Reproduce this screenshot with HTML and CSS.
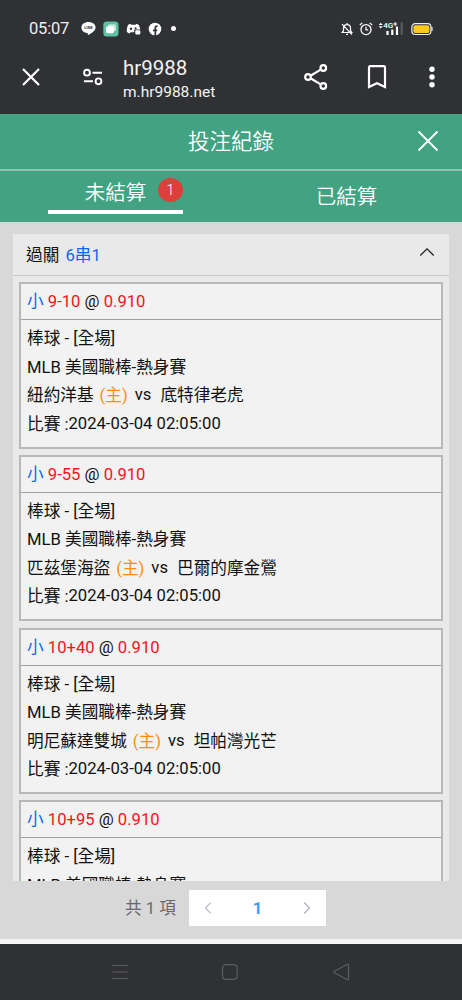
FILE: index.html
```html
<!DOCTYPE html>
<html lang="zh-Hant">
<head>
    <meta charset="UTF-8">
    <meta name="viewport" content="width=device-width, initial-scale=1.0">

    <title>投注紀錄</title>
    <link rel="stylesheet" href="styles.css">
</head>
<body>
    <div class="status-bar">
        <span class="time">05:07</span>
        <svg class="icon-line" width="15" height="15" viewBox="0 0 15 15">
            <path d="M7.500 1C3.500 1 .4 3.300.4 6.500c0 3 2.500 5.200 5.800 5.600.9.200.5 1.200.8 2 3-1.300 7.600-4.300 7.600-7.600C14.600 3.300 11.500 1 7.500 1z" fill="#fff"/>
            <text x="7.500" y="8.200" class="line-text">LINE</text>
        </svg>
        <svg class="icon-app" width="16" height="16" viewBox="0 0 16 16">
            <rect x=".3" y=".5" width="15.200" height="15" rx="3.500" fill="#5fc2a0"/>
            <rect x="5" y="3.300" width="8" height="7" rx="2" fill="#c5eadd"/>
            <rect x="3" y="5.300" width="8" height="7" rx="2" fill="#fff"/>
        </svg>
        <svg class="icon-discord" width="15" height="14" viewBox="0 0 15 14">
            <path d="M4.500 1.800 2.200 2.700C1 5 .5 7.500.9 10c1 .9 2 1.300 2.800 1.500l.8-1.300h3.700V7.500h6C14 5.600 13.300 4 12.600 2.700l-2.300-.9-.6 1H5.100z" fill="#fff"/>
            <circle cx="5" cy="6.800" r="1.200" fill="#303135"/>
            <circle cx="9.600" cy="6.200" r="1" fill="#303135"/>
            <rect x="9.300" y="8.300" width="5" height="4.300" rx="1" fill="#fff"/>
        </svg>
        <svg class="icon-facebook" width="14" height="14" viewBox="0 0 14 14">
            <circle cx="7" cy="7" r="6.300" fill="#fff"/>
            <path d="M7.300 14V8.300M5 8.300h4.200M7.300 9V5.700Q7.300 4 9.600 4.200" fill="none" stroke="#303135" stroke-width="1.700"/>
        </svg>
        <span class="dot"></span>

        <div class="status-right">
            <svg class="icon-bell" width="12" height="14" viewBox="0 0 12 14">
                <path d="M1.200 10.500h9.600L9.500 8.700V6C9.500 3.800 8 2.600 6 2.600S2.500 3.800 2.500 6v2.700zM5 12.300h2M6 1v1.500M1 2.200l10 10.300" fill="none" stroke="#fff" stroke-width="1.200"/>
            </svg>
            <svg class="icon-alarm" width="14" height="14" viewBox="0 0 14 14">
                <circle cx="7" cy="7.600" r="5" fill="none" stroke="#fff" stroke-width="1.300"/>
                <path d="M7 4.800v3h2.200M.8 3 3.300.9M13.200 3 10.700.9" fill="none" stroke="#fff" stroke-width="1.200"/>
            </svg>
            <svg class="icon-signal" width="26" height="15" viewBox="0 0 26 15">
                <path d="M.7 4 2.700 1.800 4.700 4zM.7 5.300h4L2.700 7.500z" fill="#fff"/>
                <text x="5.300" y="7" class="signal-text">4G</text>
                <path d="M15.200 3h4M17.200 1v4" stroke="#fff" stroke-width="1"/>
                <path d="M9.500 10v4M14.300 8.500V14M19 5.500V14" stroke="#fff" stroke-width="2.200"/>
                <path d="M23.700 1.500V14" stroke="#5d5e62" stroke-width="2"/>
            </svg>
            <svg class="icon-battery" width="22" height="14" viewBox="0 0 22 14">
                <rect x=".9" y="1.700" width="19" height="10.800" rx="3.200" fill="none" stroke="#eee" stroke-width="1.200"/>
                <rect x="2.400" y="3.200" width="16" height="7.800" rx="1.800" fill="#fcc91e"/>
                <path d="M21 5v4" stroke="#eee" stroke-width="1.200"/>
            </svg>
        </div>
    </div>

    <div class="browser-bar">
        <svg class="btn-close" width="20" height="20" viewBox="0 0 20 20">
            <path d="M2 2l16 16M18 2 2 18" stroke="#fff" stroke-width="2.200"/>
        </svg>
        <svg class="btn-site" width="22" height="18" viewBox="0 0 22 18">
            <g fill="none" stroke="#fff" stroke-width="1.900">
                <circle cx="5" cy="4.700" r="2.900"/>
                <path d="M10.500 4.700H20M2 13.300h9"/>
                <circle cx="16.500" cy="13.300" r="2.900"/>
            </g>
        </svg>
        <div class="site">
            <div class="site-title">hr9988</div>
            <div class="site-url">m.hr9988.net</div>
        </div>
        <svg class="btn-share" width="26" height="28" viewBox="0 0 26 28">
            <g fill="none" stroke="#fff" stroke-width="2.200">
                <path d="M7.500 12.700 17.700 6.600M7.500 15.300l10.200 6.100"/>
                <circle cx="5" cy="14" r="2.800"/>
                <circle cx="20.300" cy="5" r="2.800"/>
                <circle cx="20.300" cy="23" r="2.800"/>
            </g>
        </svg>
        <svg class="btn-bookmark" width="20" height="26" viewBox="0 0 20 26">
            <path d="M2 23V3.500Q2 2.200 3.300 2.200h13.400Q18 2.200 18 3.500V23l-8-3.700z" fill="none" stroke="#fff" stroke-width="2.200"/>
        </svg>
        <svg class="btn-more" width="8" height="24" viewBox="0 0 8 24">
            <g fill="#fff">
                <circle cx="4" cy="4.200" r="2.700"/>
                <circle cx="4" cy="12" r="2.700"/>
                <circle cx="4" cy="19.800" r="2.700"/>
            </g>
        </svg>
    </div>

    <header class="page-header">
        <h1>投注紀錄</h1>
        <svg class="header-close" width="22" height="22" viewBox="0 0 22 22">
            <path d="M1.500 1.500l19 19M20.500 1.500l-19 19" stroke="#fff" stroke-width="1.800"/>
        </svg>
    </header>

    <nav class="tabs">
        <div class="tab">
            <div class="tab-active">未結算<span class="badge">1</span></div>
        </div>
        <div class="tab tab-settled">已結算</div>
    </nav>

    <main>
        <div class="panel">
            <div class="panel-head">
                <span>過關 <span class="blue combo">6串1</span></span>
                <svg width="16" height="10" viewBox="0 0 16 10">
                    <path d="M1.300 8.500 8 1.800l6.700 6.700" fill="none" stroke="#222" stroke-width="1.300"/>
                </svg>
            </div>

            <div class="bet">
                <div class="bet-head"><span class="blue">小</span> <span class="red">9-10</span> @ <span class="red">0.910</span></div>
                <div class="bet-body">
                    <div>棒球 - [全場]</div>
                    <div>MLB 美國職棒-熱身賽</div>
                    <div class="teams"><span>紐約洋基</span><span class="home">(主)</span><span class="vs">vs</span><span>底特律老虎</span></div>
                    <div class="date">比賽 :<span>2024-03-04 02:05:00</span></div>
                </div>
            </div>

            <div class="bet">
                <div class="bet-head"><span class="blue">小</span> <span class="red">9-55</span> @ <span class="red">0.910</span></div>
                <div class="bet-body">
                    <div>棒球 - [全場]</div>
                    <div>MLB 美國職棒-熱身賽</div>
                    <div class="teams"><span>匹茲堡海盜</span><span class="home">(主)</span><span class="vs">vs</span><span>巴爾的摩金鶯</span></div>
                    <div class="date">比賽 :<span>2024-03-04 02:05:00</span></div>
                </div>
            </div>

            <div class="bet">
                <div class="bet-head"><span class="blue">小</span> <span class="red">10+40</span> @ <span class="red">0.910</span></div>
                <div class="bet-body">
                    <div>棒球 - [全場]</div>
                    <div>MLB 美國職棒-熱身賽</div>
                    <div class="teams"><span>明尼蘇達雙城</span><span class="home">(主)</span><span class="vs">vs</span><span>坦帕灣光芒</span></div>
                    <div class="date">比賽 :<span>2024-03-04 02:05:00</span></div>
                </div>
            </div>

            <div class="bet">
                <div class="bet-head"><span class="blue">小</span> <span class="red">10+95</span> @ <span class="red">0.910</span></div>
                <div class="bet-body">
                    <div>棒球 - [全場]</div>
                    <div>MLB 美國職棒-熱身賽</div>
                </div>
            </div>
        </div>

        <div class="pagination">
            <span class="total">共 1 項</span>
            <div class="pager">
                <svg width="8" height="14" viewBox="0 0 8 14">
                    <path d="M6.800 1.500 1.500 7l5.300 5.500" fill="none" stroke="#c0c4cc" stroke-width="1.400"/>
                </svg>
                <span class="page">1</span>
                <svg width="8" height="14" viewBox="0 0 8 14">
                    <path d="M1.200 1.500 6.500 7l-5.300 5.500" fill="none" stroke="#b4b8c0" stroke-width="1.400"/>
                </svg>
            </div>
        </div>
    </main>

    <footer class="nav-bar">
        <svg width="16" height="16" viewBox="0 0 16 16">
            <path d="M.5 1.500h15M.5 8h15M.5 14.500h15" stroke="#5c5d61" stroke-width="1.200"/>
        </svg>
        <svg width="18" height="18" viewBox="0 0 18 18">
            <rect x="1.500" y="1.700" width="14.600" height="14.600" rx="3.300" fill="none" stroke="#5c5d61" stroke-width="1.200"/>
        </svg>
        <svg width="18" height="18" viewBox="0 0 18 18">
            <path d="M15 1.500Q16.500.8 16.500 2.500v13Q16.500 17.200 15 16.500L2.300 9.700Q1.200 9 2.300 8.300z" fill="none" stroke="#5c5d61" stroke-width="1.200"/>
        </svg>
    </footer>
</body>
</html>
```

FILE: styles.css
```css
* {
    box-sizing: border-box;
}
body {
    margin: 0;
    height: 1000px;
    overflow: hidden;
    display: flex;
    flex-direction: column;
    font-family: Roboto, "Noto Sans CJK TC", sans-serif;
    font-size: 16.65px;
    color: #111;
    background-color: #303135;
}
svg {
    display: block;
    flex-shrink: 0;
}
.status-bar {
    height: 56px;
    flex-shrink: 0;
    display: flex;
    align-items: center;
    padding: 1px 29px 0;
    color: #eee;
}
.time {
    width: 52px;
    font-size: 16.5px;
    letter-spacing: -0.2px;
}
.line-text {
    font-size: 4px;
    font-weight: bold;
    text-anchor: middle;
    fill: #303135;
}
.icon-app {
    margin-left: 7px;
}
.icon-discord {
    margin-left: 7px;
}
.icon-facebook {
    margin-left: 7px;
}
.dot {
    width: 5px;
    height: 5px;
    margin-left: 9px;
    border-radius: 50%;
    background-color: #fff;
}
.status-right {
    display: flex;
    align-items: center;
    margin-left: auto;
}
.icon-alarm {
    margin-left: 6px;
}
.icon-signal {
    margin-left: 5px;
}
.icon-battery {
    margin-left: 7px;
}
.signal-text {
    font-size: 8px;
    font-weight: 500;
    fill: #fff;
}
.browser-bar {
    height: 58px;
    flex-shrink: 0;
    display: flex;
    align-items: center;
    padding: 0 26px 16px 21px;
    color: #f3f3f3;
}
.btn-site {
    margin-left: 41px;
}
.site {
    width: 179px;
    margin-left: 19px;
    padding-top: 4px;
}
.site-title {
    font-size: 20.5px;
    line-height: 25px;
}
.site-url {
    font-size: 15.5px;
    line-height: 22px;
}
.btn-share {
    margin-left: 1px;
}
.btn-bookmark {
    margin-left: 38px;
}
.btn-more {
    margin-left: auto;
}
.page-header {
    position: relative;
    height: 57px;
    flex-shrink: 0;
    border-bottom: 2px solid #8fc5b0;
    background-color: #41a381;
    color: #fff;
    text-align: center;
}
.page-header h1 {
    margin: 0;
    font-size: 21.5px;
    font-weight: 350;
    line-height: 55px;
}
.header-close {
    position: absolute;
    top: 16px;
    right: 23px;
}
.tabs {
    height: 51px;
    flex-shrink: 0;
    display: flex;
    background-color: #41a381;
    color: #fff;
    font-size: 20.5px;
    font-weight: 350;
}
.tab {
    flex: 1;
    display: flex;
    justify-content: center;
}
.tab-active {
    position: relative;
    width: 135px;
    height: 43px;
    border-bottom: 4px solid #fff;
    text-align: center;
    line-height: 44px;
}
.tab-settled {
    line-height: 52px;
}
.badge {
    position: absolute;
    top: 7px;
    right: 0;
    width: 25px;
    height: 24px;
    border-radius: 50%;
    background-color: #dc403b;
    font-size: 15px;
    line-height: 24px;
}
main {
    height: 722px;
    flex-shrink: 0;
    padding: 12px 13px 0;
    border-bottom: 5px solid #f5f5f5;
    background-color: #d8d8d8;
}
.panel {
    height: 647px;
    overflow: hidden;
    background-color: #e9e9e9;
}
.panel-head {
    height: 42px;
    display: flex;
    justify-content: space-between;
    padding: 0 14px 0 13px;
    border-bottom: 1px solid #c8c8c8;
    line-height: 43px;
}
.panel-head svg {
    margin-top: 13px;
}
.combo {
    margin-left: 2px;
}
.blue {
    color: #0d66f2;
}
.red {
    color: #f5141b;
}
.bet {
    height: 166.5px;
    margin: 6.2px 6px 0;
    border: 2px solid #b8b8b8;
    background-color: #f2f2f2;
}
.bet-head {
    height: 36px;
    padding-left: 6px;
    border-bottom: 1px solid #a0a0a0;
    line-height: 36px;
}
.bet-body {
    padding: 5px 6px;
    line-height: 28.5px;
}
.bet-body div {
    height: 28.5px;
}
.teams {
    display: flex;
}
.home {
    margin-left: 6px;
    color: #ff8c0d;
}
.vs {
    margin: -1px 9px 0 7px;
}
.date {
    display: flex;
}
.date span {
    margin-top: -1px;
}
.pagination {
    display: flex;
    align-items: center;
    padding: 9px 0 0 112px;
    color: #66686c;
}
.total {
    width: 64px;
    margin-top: -2px;
    white-space: nowrap;
}
.pager {
    width: 137px;
    height: 36px;
    display: flex;
    align-items: center;
    justify-content: space-between;
    padding: 0 15px;
    background-color: #fff;
}
.page {
    color: #409eff;
    font-weight: bold;
}
.nav-bar {
    flex: 1;
    display: flex;
    align-items: center;
    justify-content: center;
    gap: 93px;
}
```
